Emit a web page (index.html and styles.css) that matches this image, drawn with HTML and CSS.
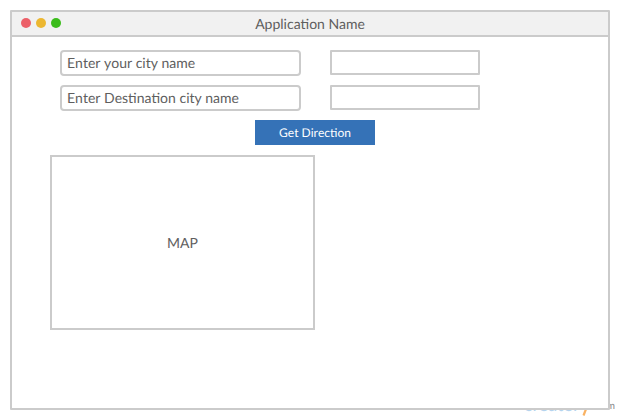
FILE: index.html
```html
<!DOCTYPE html>
<html lang="en">
<head>
<meta charset="utf-8">
<title>Application Name</title>
<link rel="stylesheet" href="styles.css">
</head>
<body>
<div class="watermark"><span class="mark-name">createl</span><svg class="mark-tail" width="10" height="20" viewBox="0 0 10 20"><path d="M9 8 L4.5 19.5" stroke="#f9b263" stroke-width="2.2" fill="none"/></svg><span class="mark-com">.com</span></div>
<main class="window">
  <header class="titlebar">
    <div class="lights"><i class="light red"></i><i class="light yellow"></i><i class="light green"></i></div>
    <h1 class="title">Application Name</h1>
  </header>
  <section class="content">
    <div class="fields">
      <div class="input">Enter your city name</div>
      <div class="box"></div>
      <div class="input">Enter Destination city name</div>
      <div class="box"></div>
    </div>
    <button class="button">Get Direction</button>
    <div class="map">MAP</div>
  </section>
</main>
</body>
</html>
```
FILE: styles.css
```css
* { box-sizing: border-box; }
body { margin: 0; width: 620px; height: 420px; padding: 10px; overflow: hidden; position: relative; background: #fff; color: #5e5e5e; font: 14px/20px Lato, sans-serif; text-rendering: geometricPrecision; }
.window { position: relative; width: 600px; height: 400px; border: 2px solid #cbcbcb; border-radius: 1px; background: #fff; }
.titlebar { position: relative; height: 25px; border-bottom: 2px solid #cbcbcb; background: #f1f1f1; display: flex; align-items: center; justify-content: center; }
.title { margin: 0; font-size: 14px; font-weight: 400; line-height: 20px; }
.lights { position: absolute; left: 8.7px; top: 6.3px; display: flex; gap: 5px; }
.light { width: 10px; height: 10px; border-radius: 50%; }
.red { background: #ec5f68; }
.yellow { background: #ecb731; }
.green { background: #3bbc1b; }
.content { padding: 13px 0 0 38px; }
.fields { display: grid; grid-template-columns: 241px 150px; column-gap: 29px; row-gap: 9px; padding-left: 10px; }
.input { height: 26px; border: 2px solid #cbcbcb; border-radius: 4px; padding: 1px 5px; font-kerning: none; }
.box { height: 25px; border: 2px solid #cbcbcb; border-radius: 1px; }
.button { display: block; width: 120px; height: 25px; margin: 9px 0 10px 205px; padding: 0; border: 0; background: #3572b7; color: #fff; font: 12px/25px Lato, sans-serif; font-kerning: none; text-rendering: geometricPrecision; }
.map { width: 265px; height: 175px; border: 2px solid #cbcbcb; display: flex; align-items: center; justify-content: center; }
.watermark { position: absolute; left: 524px; right: 5px; top: 396px; display: flex; height: 20px; }
.mark-name { width: 55px; color: #b5d4ee; font-size: 18px; line-height: 16px; }
.mark-tail { flex: none; }
.mark-com { margin-left: auto; color: #8c8c8c; font-size: 10px; line-height: 20px; }
```
